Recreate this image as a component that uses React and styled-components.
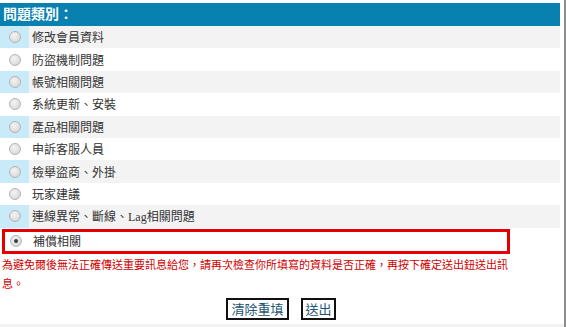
import React from 'react'
import styled, { createGlobalStyle } from 'styled-components';

const GlobalStyle = createGlobalStyle`
  body {
    margin: 0;
    background: #fff;
    font-family: "Liberation Serif", "Noto Sans CJK TC", serif;
  }
`;

const options = [
  '修改會員資料',
  '防盜機制問題',
  '帳號相關問題',
  '系統更新、安裝',
  '產品相關問題',
  '申訴客服人員',
  '檢舉盜商、外掛',
  '玩家建議',
  '連線異常、斷線、Lag相關問題',
];

const App = () => {
  return (
    <Page>
      <GlobalStyle />
      <Form>
        <Header>問題類別：</Header>
        {options.map((label, i) => (
          <Row key={label} $odd={i % 2 === 0}>
            <RadioCell $odd={i % 2 === 0}>
              <Radio />
            </RadioCell>
            <Label>{label}</Label>
          </Row>
        ))}
        <SelectedRow>
          <SelectedCell>
            <Radio $checked />
          </SelectedCell>
          <Label>補償相關</Label>
        </SelectedRow>
        <Notice>
          為避免爾後無法正確傳送重要訊息給您，請再次檢查你所填寫的資料是否正確，再按下確定送出鈕送出訊息。
        </Notice>
        <Buttons>
          <Button $w={63}>清除重填</Button>
          <Button $w={35}>送出</Button>
        </Buttons>
      </Form>
    </Page>
  )
};

const Page = styled.div`
  width: 566px;
  height: 327px;
  box-sizing: border-box;
  padding: 3px 4px 0 0;
  border-right: 2px solid #8c8c8c;
  overflow: hidden;
  background: linear-gradient(to bottom, #fff 324px, #f2f2f2 324px);
`;

const Form = styled.div`
  display: flex;
  flex-direction: column;
`;

const Header = styled.div`
  height: 23px;
  line-height: 23px;
  padding-left: 3px;
  background: #0880b0;
  color: #fff;
  font-weight: bold;
  font-size: 14px;
`;

const Row = styled.div`
  display: flex;
  align-items: stretch;
  height: 22.4px;
  background: ${p => (p.$odd ? '#f3f3f3' : '#fff')};
`;

const RadioCell = styled.div`
  width: 29px;
  flex: none;
  display: flex;
  align-items: center;
  justify-content: center;
  background: ${p => (p.$odd ? '#c9eaf8' : 'transparent')};
`;

const SelectedRow = styled.div`
  display: flex;
  align-items: stretch;
  box-sizing: border-box;
  width: 508px;
  height: 25px;
  margin: 1px 0 0 2px;
  border: 3px solid #e40000;
  background: #fff;
`;

const SelectedCell = styled.div`
  width: 25px;
  flex: none;
  display: flex;
  align-items: center;
  padding-left: 5px;
  box-sizing: border-box;
`;

const Radio = styled.span`
  position: relative;
  width: 12px;
  height: 12px;
  box-sizing: border-box;
  border-radius: 50%;
  border: 1px solid #b4b4b4;
  background: radial-gradient(circle at 40% 35%, #f4f4f4 0%, #dcdcdc 70%, #cfcfcf 100%);

  &::after {
    content: '';
    display: ${p => (p.$checked ? 'block' : 'none')};
    position: absolute;
    left: 3px;
    top: 3px;
    width: 4px;
    height: 4px;
    border-radius: 50%;
    background: #3c3c3c;
  }
`;

const Label = styled.div`
  display: flex;
  align-items: center;
  padding-left: 3px;
  font-size: 12px;
  color: #333;
`;

const Notice = styled.p`
  width: 512px;
  margin: 2px 0 0 2px;
  font-size: 11px;
  line-height: 19px;
  color: #d00000;
`;

const Buttons = styled.div`
  display: flex;
  justify-content: center;
  gap: 12px;
  margin-top: 4px;
  padding-left: 2px;
`;

const Button = styled.button`
  width: ${p => p.$w}px;
  height: 22px;
  padding: 0;
  border: 2px solid #111;
  background: #fff;
  color: #1d5673;
  font-family: "Noto Sans CJK TC", sans-serif;
  font-size: 13px;
  line-height: 18px;
`;

export default App;
